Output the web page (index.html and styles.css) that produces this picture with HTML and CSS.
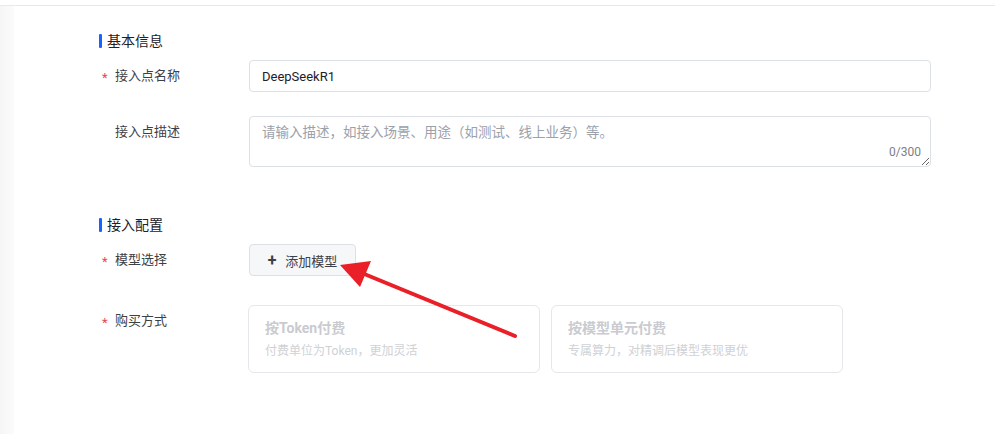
FILE: index.html
```html
<!DOCTYPE html>
<html lang="zh-CN">
<head>
    <meta charset="UTF-8">
    <meta name="viewport" content="width=device-width, initial-scale=1.0">
    <title>创建接入点</title>
    <link rel="stylesheet" href="styles.css">
</head>
<body>
    <div class="topbar"></div>
    <div class="pagina">
        <div class="lateral"></div>
        <div class="contenido">

            <h3 class="seccion">基本信息</h3>
            <div class="fila">
                <label class="etiqueta requerido">接入点名称</label>
                <div class="control">
                    <input class="campo" type="text" value="DeepSeekR1">
                </div>
            </div>
            <div class="fila">
                <label class="etiqueta">接入点描述</label>
                <div class="control area">
                    <textarea class="campo-area" placeholder="请输入描述，如接入场景、用途（如测试、线上业务）等。"></textarea>
                    <span class="contador">0/300</span>
                </div>
            </div>

            <h3 class="seccion seccion2">接入配置</h3>
            <div class="fila">
                <label class="etiqueta requerido">模型选择</label>
                <div class="control">
                    <button class="boton"><span class="mas">+</span>添加模型</button>
                </div>
            </div>
            <div class="fila fila-pago">
                <label class="etiqueta requerido">购买方式</label>
                <div class="control tarjetas">
                    <div class="tarjeta">
                        <div class="tarjeta-titulo">按Token付费</div>
                        <div class="tarjeta-texto">付费单位为Token，更加灵活</div>
                    </div>
                    <div class="tarjeta">
                        <div class="tarjeta-titulo">按模型单元付费</div>
                        <div class="tarjeta-texto">专属算力，对精调后模型表现更优</div>
                    </div>
                </div>
            </div>

            <!-- flecha roja de anotacion -->
            <svg class="flecha" width="200" height="90" viewBox="0 0 200 90">
                <line x1="186" y1="82" x2="28" y2="17" stroke="#ea1f27" stroke-width="4" stroke-linecap="round"/>
                <polygon points="11,11 42,7 31,33" fill="#ea1f27"/>
            </svg>
        </div>
    </div>
</body>
</html>
```

FILE: styles.css
```css
body{
    margin: 0;
    background: #fff;
    font-family: Roboto, "Noto Sans CJK SC", sans-serif;
    color: #1d2129;
}
.topbar{
    height: 5px;
    border-bottom: 1px solid #e8e9eb;
}
.pagina{
    display: flex;
    height: 428px;
}
.lateral{
    width: 14px;
    background: linear-gradient(to right, #f6f6f7, #fbfbfb);
}
.contenido{
    position: relative;
    flex: 1;
    padding: 25px 0 0 85px;
}
.seccion{
    margin: 0 0 9px;
    font-size: 14px;
    font-weight: normal;
    line-height: 20px;
    color: #1d2129;
    display: flex;
    align-items: center;
}
.seccion::before{
    content: '';
    width: 3px;
    height: 14px;
    background: #1664ff;
    border-radius: 1px;
    margin-right: 5px;
}
.seccion2{
    margin-top: 48px;
}
.fila{
    display: flex;
    margin-bottom: 24px;
}
.fila-pago{
    margin-top: 29px;
}
.etiqueta{
    width: 150px;
    flex: none;
    box-sizing: border-box;
    padding-left: 16px;
    font-size: 13px;
    line-height: 32px;
    color: #3c4047;
    position: relative;
}
.requerido::before{
    content: '*';
    position: absolute;
    left: 3px;
    top: 2px;
    color: #e5484d;
    font-size: 13px;
}
.control{
    width: 682px;
}
.campo{
    box-sizing: border-box;
    width: 100%;
    height: 32px;
    border: 1px solid #dde0e5;
    border-radius: 4px;
    padding: 0 12px;
    font-family: Roboto, "Noto Sans CJK SC", sans-serif;
    font-size: 13px;
    color: #1d2129;
    outline: none;
}
.area{
    position: relative;
}
.campo-area{
    display: block;
    box-sizing: border-box;
    width: 100%;
    height: 51px;
    border: 1px solid #dde0e5;
    border-radius: 4px;
    padding: 5px 12px;
    font-family: Roboto, "Noto Sans CJK SC", sans-serif;
    font-size: 13.5px;
    line-height: 20px;
    color: #1d2129;
    outline: none;
}
.campo-area::placeholder{
    color: #9ca1a9;
}
.contador{
    position: absolute;
    right: 10px;
    bottom: 8px;
    font-size: 12px;
    color: #7c8087;
}
.boton{
    height: 32px;
    width: 107px;
    border: 1px solid #dde0e5;
    border-radius: 4px;
    background: #f6f7f9;
    font-family: Roboto, "Noto Sans CJK SC", sans-serif;
    font-size: 13px;
    color: #3c4047;
    display: flex;
    align-items: center;
    justify-content: center;
    padding: 0;
}
.mas{
    font-size: 16px;
    font-weight: bold;
    margin-right: 9px;
    color: #3c4047;
}
.tarjetas{
    display: flex;
    gap: 11px;
    margin-left: -1px;
}
.tarjeta{
    box-sizing: border-box;
    width: 292px;
    height: 68px;
    border: 1px solid #e6e7ea;
    border-radius: 6px;
    padding: 11px 16px 0;
}
.tarjeta-titulo{
    font-size: 14px;
    font-weight: bold;
    line-height: 22px;
    color: #c9cbd0;
}
.tarjeta-texto{
    font-size: 12px;
    line-height: 20px;
    margin-top: 2px;
    color: #cfd1d5;
}
.flecha{
    position: absolute;
    left: 315px;
    top: 248px;
}
```
